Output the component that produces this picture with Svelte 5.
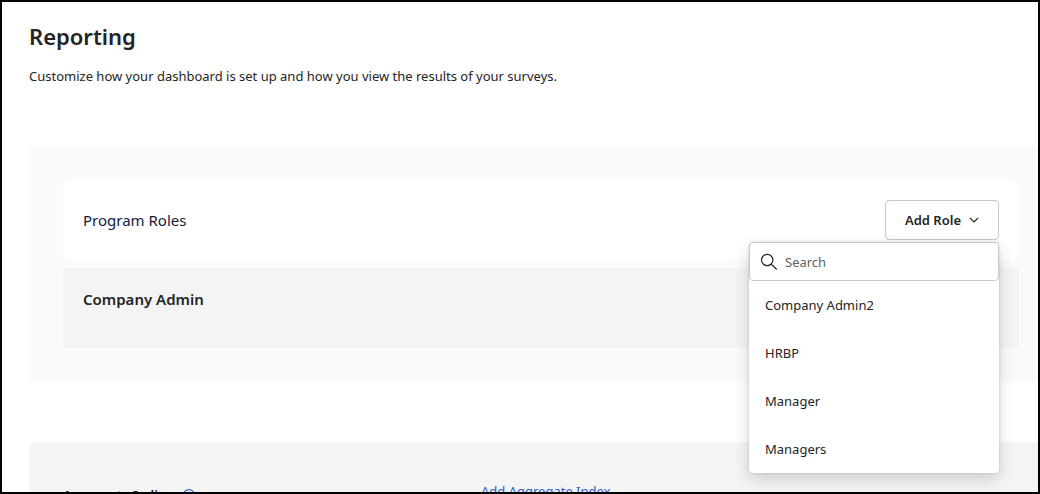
<script>
  let query = $state('');
  let open = $state(true);
  const roles = ['Company Admin2', 'HRBP', 'Manager', 'Managers'];
  const shown = $derived(roles.filter((r) => r.toLowerCase().includes(query.toLowerCase())));
</script>

<main class="page">
  <header>
    <h1>Reporting</h1>
    <p>Customize how your dashboard is set up and how you view the results of your surveys.</p>
  </header>

  <section class="panel roles">
    <div class="card">
      <h2>Program Roles</h2>
      <div class="picker">
        <button class="add" type="button" aria-expanded={open} onclick={() => (open = !open)}>
          Add Role
          <svg width="10" height="6" viewBox="0 0 10 6" aria-hidden="true">
            <path d="M1 1l4 4 4-4" fill="none" stroke="currentColor" stroke-width="1.1" />
          </svg>
        </button>
        {#if open}
          <div class="menu">
            <label class="search">
              <svg width="18" height="18" viewBox="0 0 18 18" aria-hidden="true">
                <circle cx="7.2" cy="7" r="5.7" fill="none" stroke="currentColor" stroke-width="1.2" />
                <path d="M11.3 11.1l5.4 5.4" fill="none" stroke="currentColor" stroke-width="1.3" />
              </svg>
              <input type="text" placeholder="Search" aria-label="Search" bind:value={query} />
            </label>
            <ul>
              {#each shown as role}
                <li><button type="button">{role}</button></li>
              {/each}
            </ul>
          </div>
        {/if}
      </div>
    </div>
    <div class="role">
      <h3>Company Admin</h3>
    </div>
  </section>

  <section class="panel indices">
    <h4>
      Aggregate Indices
      <svg width="12" height="12" viewBox="0 0 12 12" aria-hidden="true">
        <circle cx="6" cy="6" r="5.4" fill="none" stroke="currentColor" stroke-width="1.1" />
        <path d="M6 5.2v3.8M6 3v1.1" fill="none" stroke="currentColor" stroke-width="1.1" />
      </svg>
    </h4>
    <a href="#add-index">Add Aggregate Index</a>
  </section>
</main>

<style>
  :global(body) {
    margin: 0;
    background: #fff;
  }

  .page {
    box-sizing: border-box;
    height: 100vh;
    overflow: hidden;
    border: 2px solid #000;
    padding: 19px 0 0 27px;
    color: #242424;
    font: 13px/20px 'Segoe UI', 'Noto Sans', 'Open Sans', sans-serif;
  }

  h1,
  h2,
  h3,
  h4,
  p,
  ul {
    margin: 0;
    padding: 0;
  }

  header {
    padding-bottom: 60px;
  }

  h1 {
    margin-bottom: 15px;
    font-size: 22px;
    line-height: 30px;
    font-weight: 600;
  }

  .panel {
    border-radius: 8px 0 0 8px;
  }

  .roles {
    display: grid;
    gap: 8px;
    margin-bottom: 60px;
    padding: 34px 19px 34px 34px;
    background: #fafafa;
  }

  .card {
    display: flex;
    align-items: center;
    justify-content: space-between;
    padding: 20px;
    border-radius: 8px;
    background: #fff;
  }

  h2 {
    color: #14213d;
    font-size: 15px;
    font-weight: 400;
  }

  .picker {
    position: relative;
  }

  button,
  input {
    color: inherit;
    font: inherit;
  }

  .add {
    display: flex;
    align-items: center;
    gap: 8px;
    height: 40px;
    padding: 0 19px;
    border: 1px solid #c8c8c8;
    border-radius: 4px;
    background: #fff;
    font-weight: 600;
  }

  .menu {
    position: absolute;
    top: 42px;
    right: 0;
    z-index: 1;
    width: 250px;
    border-radius: 4px;
    background: #fff;
    box-shadow:
      0 6px 16px rgba(0, 0, 0, 0.16),
      0 0 3px rgba(0, 0, 0, 0.14);
  }

  .search {
    display: flex;
    align-items: center;
    gap: 7px;
    box-sizing: border-box;
    height: 39px;
    padding: 0 10px;
    border: 1px solid #c8c8c8;
    border-radius: 4px;
  }

  .search input {
    flex: 1;
    min-width: 0;
    padding: 0;
    border: 0;
    outline: 0;
    background: none;
  }

  .search input::placeholder {
    color: #616161;
    opacity: 1;
  }

  ul {
    list-style: none;
  }

  li button {
    display: block;
    width: 100%;
    height: 48px;
    padding: 0 16px;
    border: 0;
    background: none;
    text-align: left;
  }

  .role {
    padding: 21px 20px 39px;
    background: #f4f4f4;
  }

  h3 {
    font-size: 15px;
    font-weight: 600;
  }

  .indices {
    display: grid;
    grid-template-columns: 418px 1fr;
    padding: 39px 34px;
    background: #f4f4f4;
  }

  h4 {
    display: flex;
    align-items: center;
    gap: 5px;
    padding-top: 4px;
    font-size: 13px;
    font-weight: 600;
  }

  h4 svg,
  a {
    color: #2f5bd0;
  }

  a {
    text-decoration: none;
  }
</style>
